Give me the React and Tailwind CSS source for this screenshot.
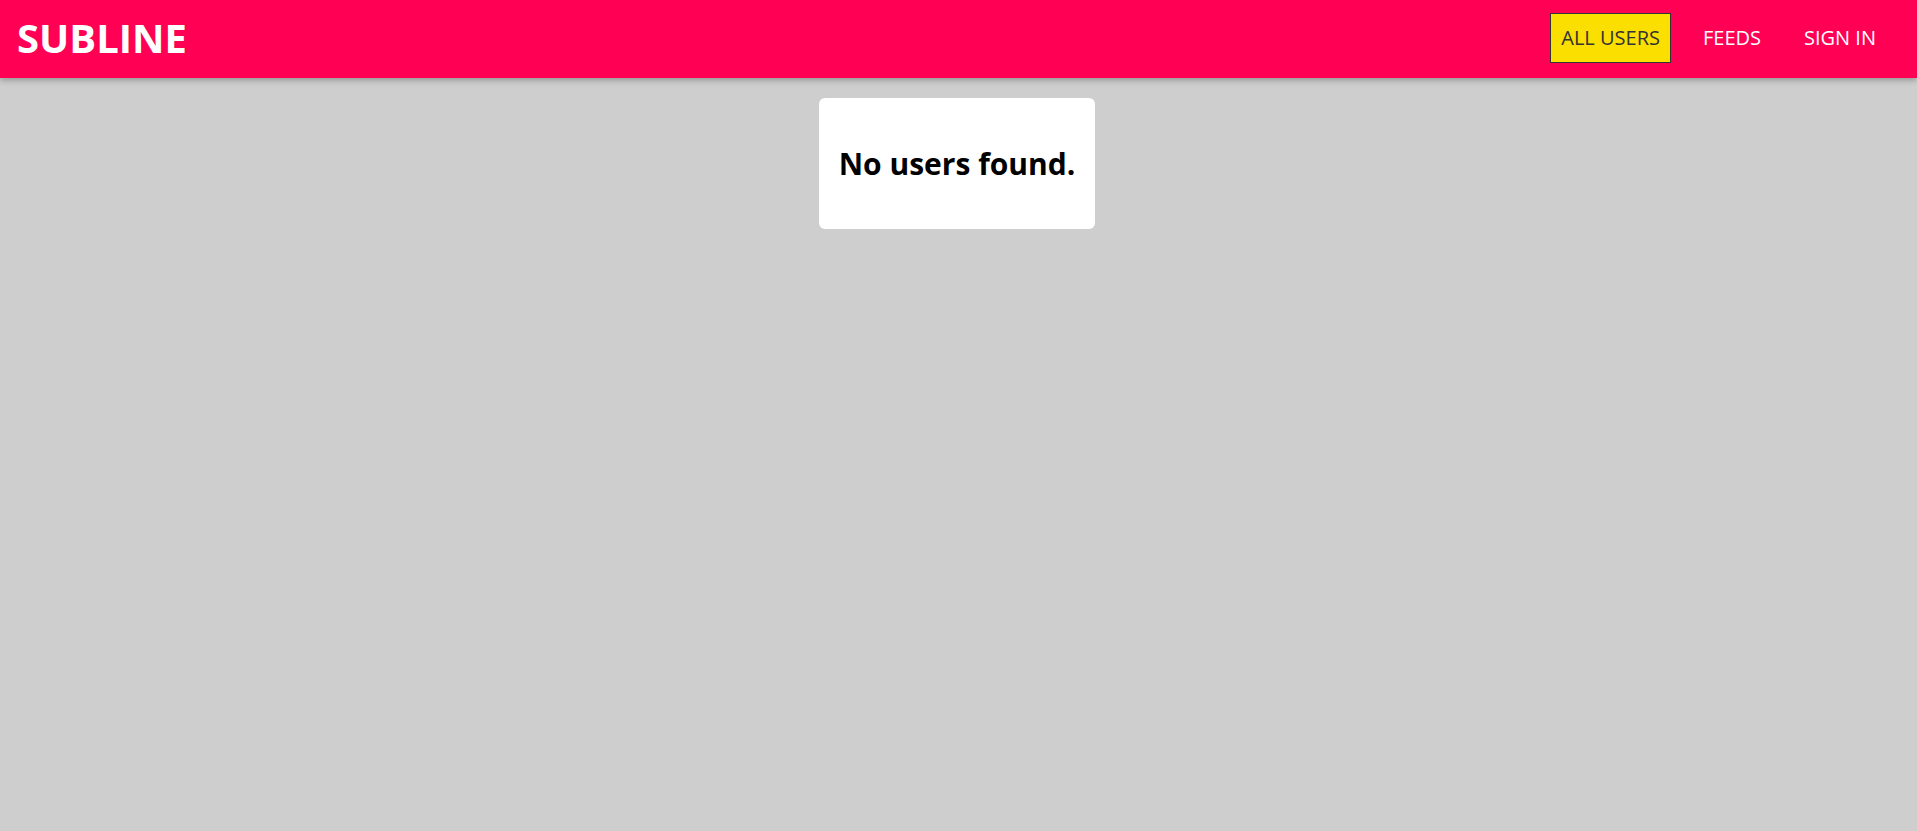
export default function App() {
  return (
    <div className="min-h-screen bg-[#cecece] font-['Open_Sans',sans-serif]">
      <header className="flex h-[78px] items-center justify-between bg-[#ff0055] pl-[17px] pr-[30px] shadow-[0_2px_6px_rgba(0,0,0,0.3)]">
        <h1 className="mb-[2px] text-[40px] font-bold leading-none text-white">SUBLINE</h1>
        <nav className="mb-[2px] flex items-center gap-[21px] text-[20px] text-white">
          <a className="border border-[#333] bg-[#fadf00] px-[10px] py-[10px] leading-[28px] text-[#333]">ALL USERS</a>
          <a className="px-[11px] py-[10px] leading-[28px]">FEEDS</a>
          <a className="px-[11px] py-[10px] leading-[28px]">SIGN IN</a>
        </nav>
      </header>
      <main className="flex justify-center pr-[3px] pt-[20px]">
        <div className="flex h-[131px] w-[276px] items-center justify-center rounded-md bg-white">
          <h2 className="text-[30px] font-bold text-black">No users found.</h2>
        </div>
      </main>
    </div>
  );
}
